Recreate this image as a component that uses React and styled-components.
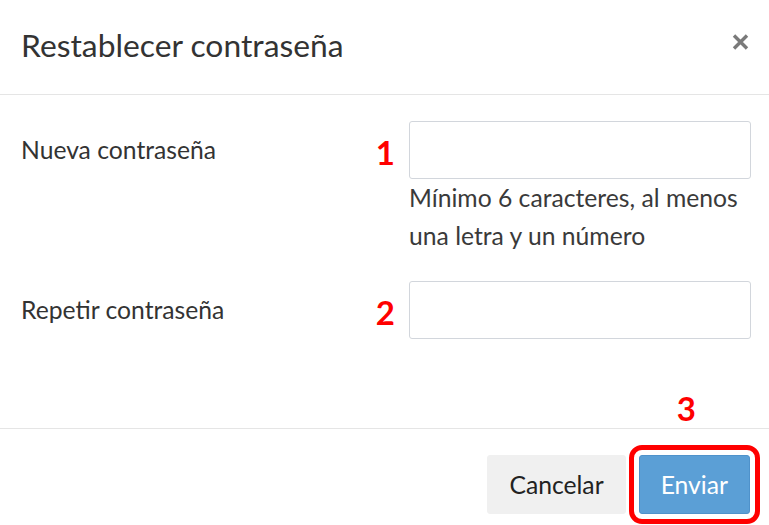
import React from "react";
import styled, { createGlobalStyle } from "styled-components";

const GlobalStyle = createGlobalStyle`
  html, body {
    margin: 0;
    padding: 0;
    background: #fff;
  }
  body {
    font-family: Lato, "Open Sans", sans-serif;
    color: #333;
  }
`;

const Modal = styled.div`
  width: 769px;
  height: 525px;
  display: flex;
  flex-direction: column;
  background: #fff;
`;

const Header = styled.div`
  box-sizing: border-box;
  height: 95px;
  padding: 25px 20px 0 21px;
  display: flex;
  justify-content: space-between;
  align-items: flex-start;
  border-bottom: 1px solid #e5e5e5;
`;

const Title = styled.h4`
  margin: 0;
  font-size: 31.8px;
  font-weight: 400;
  line-height: 40px;
  color: #333;
`;

const Close = styled.button`
  border: 0;
  background: none;
  padding: 0;
  margin-top: 8px;
  width: 17px;
  height: 18px;
  cursor: pointer;
  display: flex;
`;

const Body = styled.div`
  box-sizing: border-box;
  height: 333px;
  padding: 26px 18px 0 21px;
  display: grid;
  grid-template-columns: 1fr 342px;
  row-gap: 26px;
  align-content: start;
`;

const Label = styled.label`
  font-size: 24.7px;
  line-height: 58px;
  color: #333;
`;

const Field = styled.div`
  position: relative;
`;

const Input = styled.input`
  box-sizing: border-box;
  display: block;
  width: 342px;
  height: 58px;
  border: 1.5px solid #d2d6dc;
  border-radius: 3px;
  background: #fff;
  font: inherit;
  font-size: 22px;
  padding: 0 14px;
`;

const Help = styled.p`
  margin: 0;
  font-size: 24.7px;
  line-height: 38px;
  color: #3a3a3a;
`;

const Step = styled.span`
  position: absolute;
  font-family: Lato, sans-serif;
  font-weight: 700;
  font-size: 33px;
  line-height: 1;
  color: #ff0000;
  ${({ $side }) =>
    $side === "top"
      ? "bottom: calc(100% + 30px); left: 38px;"
      : "top: 15px; right: calc(100% + 14px);"}
`;

const Footer = styled.div`
  box-sizing: border-box;
  flex: 1;
  border-top: 1px solid #e5e5e5;
  padding: 26px 19px 0 0;
  display: flex;
  justify-content: flex-end;
  align-items: flex-start;
  gap: 13px;
`;

const ButtonSlot = styled.div`
  position: relative;
`;

const Button = styled.button`
  box-sizing: border-box;
  height: 59px;
  padding: 0 21px;
  border-radius: 3px;
  font-family: Lato, "Open Sans", sans-serif;
  font-size: 24.7px;
  cursor: pointer;
  background: ${({ $primary }) => ($primary ? "#5b9fd6" : "#f0f0f0")};
  color: ${({ $primary }) => ($primary ? "#fff" : "#222")};
  border: 1px solid ${({ $primary }) => ($primary ? "#4f92cb" : "#f0f0f0")};
  ${({ $highlight }) =>
    $highlight &&
    "outline: 5px solid #ff0000; outline-offset: 5px;"}
`;

function CloseIcon() {
  return (
    <svg width="17" height="18" viewBox="0 0 17 18">
      <path
        d="M2 2.5 L15 15.5 M15 2.5 L2 15.5"
        stroke="#7a7a7a"
        strokeWidth="3.4"
        strokeLinecap="butt"
      />
    </svg>
  );
}

export default function App() {
  return (
    <Modal>
      <GlobalStyle />
      <Header>
        <Title>Restablecer contraseña</Title>
        <Close aria-label="Cerrar">
          <CloseIcon />
        </Close>
      </Header>

      <Body>
        <Label>Nueva contraseña</Label>
        <Field>
          <Step>1</Step>
          <Input type="password" />
          <Help>Mínimo 6 caracteres, al menos una letra y un número</Help>
        </Field>

        <Label>Repetir contraseña</Label>
        <Field>
          <Step>2</Step>
          <Input type="password" />
        </Field>
      </Body>

      <Footer>
        <Button>Cancelar</Button>
        <ButtonSlot>
          <Step $side="top">3</Step>
          <Button $primary $highlight>
            Enviar
          </Button>
        </ButtonSlot>
      </Footer>
    </Modal>
  );
}
